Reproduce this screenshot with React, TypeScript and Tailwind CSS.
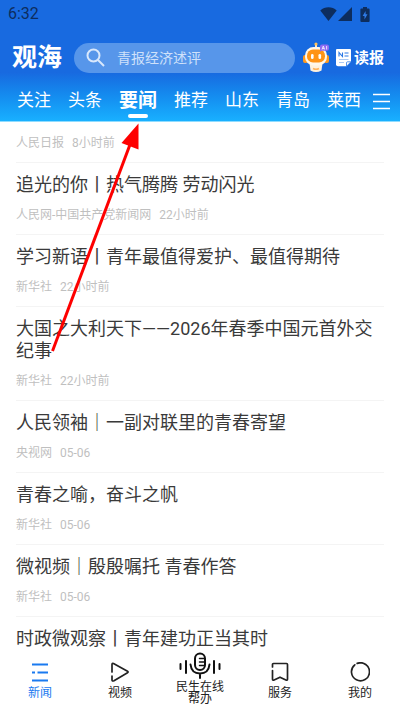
import React from "react";

type Article = { title: string; source?: string; time?: string };

const tabs = ["关注", "头条", "要闻", "推荐", "山东", "青岛", "莱西"];

const articles: Article[] = [
  { title: "追光的你丨热气腾腾 劳动闪光", source: "人民网-中国共产党新闻网", time: "22小时前" },
  { title: "学习新语丨青年最值得爱护、最值得期待", source: "新华社", time: "22小时前" },
  { title: "大国之大利天下——2026年春季中国元首外交纪事", source: "新华社", time: "22小时前" },
  { title: "人民领袖｜一副对联里的青春寄望", source: "央视网", time: "05-06" },
  { title: "青春之喻，奋斗之帆", source: "新华社", time: "05-06" },
  { title: "微视频｜殷殷嘱托 青春作答", source: "新华社", time: "05-06" },
  { title: "时政微观察丨青年建功正当其时" },
];

function StatusBar() {
  return (
    <div className="flex h-7 items-center justify-between pl-2 pr-[30px] text-[#0d2d5e]">
      <span className="text-base">6:32</span>
      <div className="flex items-center gap-2">
        <div className="flex items-center gap-px">
          <svg width="17" height="14" viewBox="0 0 17 14" fill="currentColor" aria-hidden="true">
            <path d="M8.5 14 0.3 3.6C2.6 1.4 5.4 0.3 8.5 0.3s5.9 1.1 8.2 3.3z" />
          </svg>
          <svg width="14" height="14" viewBox="0 0 14 14" fill="currentColor" aria-hidden="true">
            <path d="M14 0v14H0z" />
          </svg>
        </div>
        <svg width="10" height="15" viewBox="0 0 10 15" aria-hidden="true">
          <path d="M3 0h4v1.5h1.6q1 0 1 1V14q0 1-1 1H1.4q-1 0-1-1V2.5q0-1 1-1H3z" fill="currentColor" />
          <path d="M5.6 4 2.6 9h1.9v3.4l3-5.2H5.6z" fill="#2f7be6" />
        </svg>
      </div>
    </div>
  );
}

function Robot() {
  return (
    <svg width="28" height="31" viewBox="0 0 28 31" aria-hidden="true">
      <rect x="13" y="2" width="2" height="5" fill="#ffe9c9" />
      <circle cx="14" cy="2" r="1.6" fill="#ffc25a" />
      <rect x="1" y="13" width="5" height="8" rx="2" fill="#ff9a1f" />
      <rect x="22" y="13" width="5" height="8" rx="2" fill="#ff9a1f" />
      <path d="M7.5 21h13l-1 7.4q-5.5 3.2-11 0z" fill="#fff1dc" />
      <rect x="3" y="5" width="22" height="18.5" rx="8.5" fill="#fff7ea" />
      <rect x="5" y="7.5" width="18" height="13" rx="6" fill="#ff9416" />
      <rect x="9" y="12" width="2.6" height="5" rx="1.3" fill="#fff" />
      <rect x="16.5" y="12" width="2.6" height="5" rx="1.3" fill="#fff" />
      <path d="M11 26.5q3 1.6 6 0" stroke="#ffb35c" strokeWidth="1.5" fill="none" />
      <path d="M20 2.5h5q2 0 2 2v2.2q0 2-2 2h-5.800L18 9.800V4.500q0-2 2-2z" fill="#8f6bf2" />
      <path d="m20 7.500 1.300-3.400 1.300 3.400M20.500 6.600h1.700M24.600 4v3.500" stroke="#fff" strokeWidth=".8" fill="none" />
    </svg>
  );
}

function Paper() {
  return (
    <svg width="16" height="18" viewBox="0 0 16 18" aria-hidden="true">
      <path d="M1 0h13q1 0 1 1v11.5l-4.5 4.8H2q-2 0-2-2V1q0-1 1-1z" fill="#fff" />
      <path d="M3 7.500V3.500l3.500 4V3.500M8.500 4h4M8.500 7h4" stroke="#2a78e6" strokeWidth="1.1" fill="none" />
      <path d="M3 10.500h9.500M3 13.500h5" stroke="#a9c9f6" fill="none" />
      <path d="M10.500 17.300v-3.500q0-1 1-1h3.500z" fill="#fff" stroke="#2a78e6" strokeWidth=".8" />
    </svg>
  );
}

function Header() {
  return (
    <header className="shrink-0 border-b border-[#8fdcff] bg-linear-to-b from-[#186ae0] from-60% to-[#19b0ff] text-white">
      <StatusBar />
      <div className="flex items-center pt-[14px] pl-3 pr-4">
        <h1 className="w-[62px] text-[25px] leading-[30px] font-bold">观海</h1>
        <label className="flex h-[30px] min-w-0 flex-1 items-center gap-3 rounded-full bg-[#5796ea] pl-3">
          <svg width="19" height="19" viewBox="0 0 19 19" fill="none" stroke="#d9e8fc" strokeWidth="2" aria-hidden="true">
            <circle cx="7.5" cy="7.5" r="6" />
            <path d="m12 12 6 6" />
          </svg>
          <input
            type="search"
            aria-label="搜索"
            placeholder="青报经济述评"
            className="min-w-0 flex-1 bg-transparent text-sm outline-none placeholder:text-[#cfe1fa]"
          />
        </label>
        <button type="button" aria-label="AI" className="ml-[7px]">
          <Robot />
        </button>
        <button type="button" className="ml-[6px] flex items-center gap-[2px] text-[15px] leading-6 font-bold">
          <Paper />
          读报
        </button>
      </div>
      <div className="flex items-start justify-between pt-3 pl-[17px] pr-[10px]">
        <nav className="flex gap-[17px]">
          {tabs.map((tab) =>
            tab === "要闻" ? (
              <a key={tab} href="#yaowen" aria-current="page" className="flex h-9 flex-col items-center pt-1 text-[19px] leading-6 font-bold">
                {tab}
                <span className="mt-px h-1 w-5 shrink-0 rounded-full bg-white" />
              </a>
            ) : (
              <a key={tab} href="#tab" className="h-9 pt-[3px] text-[17px] leading-6">
                {tab}
              </a>
            ),
          )}
        </nav>
        <button type="button" aria-label="全部频道" className="pt-2">
          <svg width="17" height="17" viewBox="0 0 17 17" stroke="#fff" strokeWidth="1.7" aria-hidden="true">
            <path d="M0 1.500h17M0 8.500h17M0 15.500h17" />
          </svg>
        </button>
      </div>
    </header>
  );
}

function Meta({ source, time }: { source: string; time?: string }) {
  return (
    <p className="flex gap-2 text-xs leading-[18px] text-[#bfbfbf]">
      <span>{source}</span>
      <span>{time}</span>
    </p>
  );
}

function NavItem({ label, active, children }: { label: string; active?: boolean; children: React.ReactNode }) {
  return (
    <button
      type="button"
      className={
        active
          ? "flex flex-1 flex-col items-center gap-[2px] pt-3 text-xs leading-[18px] text-[#1a7af0]"
          : "flex flex-1 flex-col items-center gap-[2px] pt-3 text-xs leading-[18px] text-[#222]"
      }
    >
      {children}
      {label}
    </button>
  );
}

function BottomNav() {
  return (
    <nav className="flex h-[60px] shrink-0 items-start bg-white">
      <NavItem label="新闻" active>
        <svg width="20" height="20" viewBox="0 0 20 20" fill="none" stroke="currentColor" strokeWidth="2" aria-hidden="true">
          <path d="M2 2.500h16M2 10.500h3M7.500 10.500H18M2 18.500h16" />
        </svg>
      </NavItem>
      <NavItem label="视频">
        <svg width="20" height="20" viewBox="0 0 20 20" fill="none" stroke="currentColor" strokeWidth="1.7" strokeLinecap="round" strokeLinejoin="round" aria-hidden="true">
          <path d="M2 10V2.500q0-1.500 1.500-1L17.500 9.300q1.200.8 0 1.500L4 18.800q-2 .7-2-1V14" />
        </svg>
      </NavItem>
      <button type="button" className="flex flex-1 flex-col items-center gap-[2px] pt-[2px] text-xs leading-3 text-[#222]">
        <svg width="42" height="27" viewBox="0 0 42 27" fill="none" stroke="#111" strokeWidth="2" strokeLinecap="round" aria-hidden="true">
          <rect x="16" y="1.5" width="10" height="16.5" rx="5" />
          <path d="M20.500 6.500h5M20.500 10h5M20.500 13.500h4.500" strokeWidth="1.5" />
          <path d="M11.500 12.500q1 9 9.500 9t9.500-9M21 21.500V26" />
          <path d="M1.500 12v5M7 9v12M35 9v12M40.500 12v5" />
        </svg>
        <span className="w-12">民生在线帮办</span>
      </button>
      <NavItem label="服务">
        <svg width="20" height="20" viewBox="0 0 20 20" fill="none" stroke="currentColor" strokeWidth="1.7" strokeLinecap="round" strokeLinejoin="round" aria-hidden="true">
          <path d="M2.500 5V2.500q0-1 1-1h13q1 0 1 1V17q0 1.800-1.600 1L10 15.200 4.100 18q-1.600.8-1.600-1V8.500" />
        </svg>
      </NavItem>
      <NavItem label="我的">
        <svg width="20" height="20" viewBox="0 0 20 20" fill="none" stroke="currentColor" strokeWidth="1.7" strokeLinecap="round" aria-hidden="true">
          <path d="M4.800 2.800a9 9 0 1 0 2.400-1.400M7.200 1.400A9 9 0 0 1 10 1" />
        </svg>
      </NavItem>
    </nav>
  );
}

export default function App() {
  return (
    <div className="relative flex h-screen flex-col overflow-hidden bg-white font-['Roboto','Noto_Sans_CJK_SC',sans-serif]">
      <Header />
      <main className="min-h-0 flex-1 overflow-hidden px-4">
        <div className="border-b border-[#f4f4f4] pt-3 pb-[10px]">
          <Meta source="人民日报" time="8小时前" />
        </div>
        {articles.map((a) => (
          <article key={a.title} className="border-b border-[#f4f4f4] pt-[11px] pb-[10px] last:border-b-0 last:pb-0">
            <h2 className="text-lg leading-[22px] text-[#3a3a3a]">{a.title}</h2>
            {a.source && (
              <div className="pt-[10px]">
                <Meta source={a.source} time={a.time} />
              </div>
            )}
          </article>
        ))}
      </main>
      <BottomNav />
      <svg className="pointer-events-none absolute top-[120px] left-[48px]" width="96" height="236" viewBox="48 120 96 236" aria-hidden="true">
        <path d="M52.500 351 131 142" stroke="#fe0000" strokeWidth="3" />
        <path d="M138.500 123.500 121.500 143 138.500 149.500z" fill="#fe0000" />
      </svg>
    </div>
  );
}
